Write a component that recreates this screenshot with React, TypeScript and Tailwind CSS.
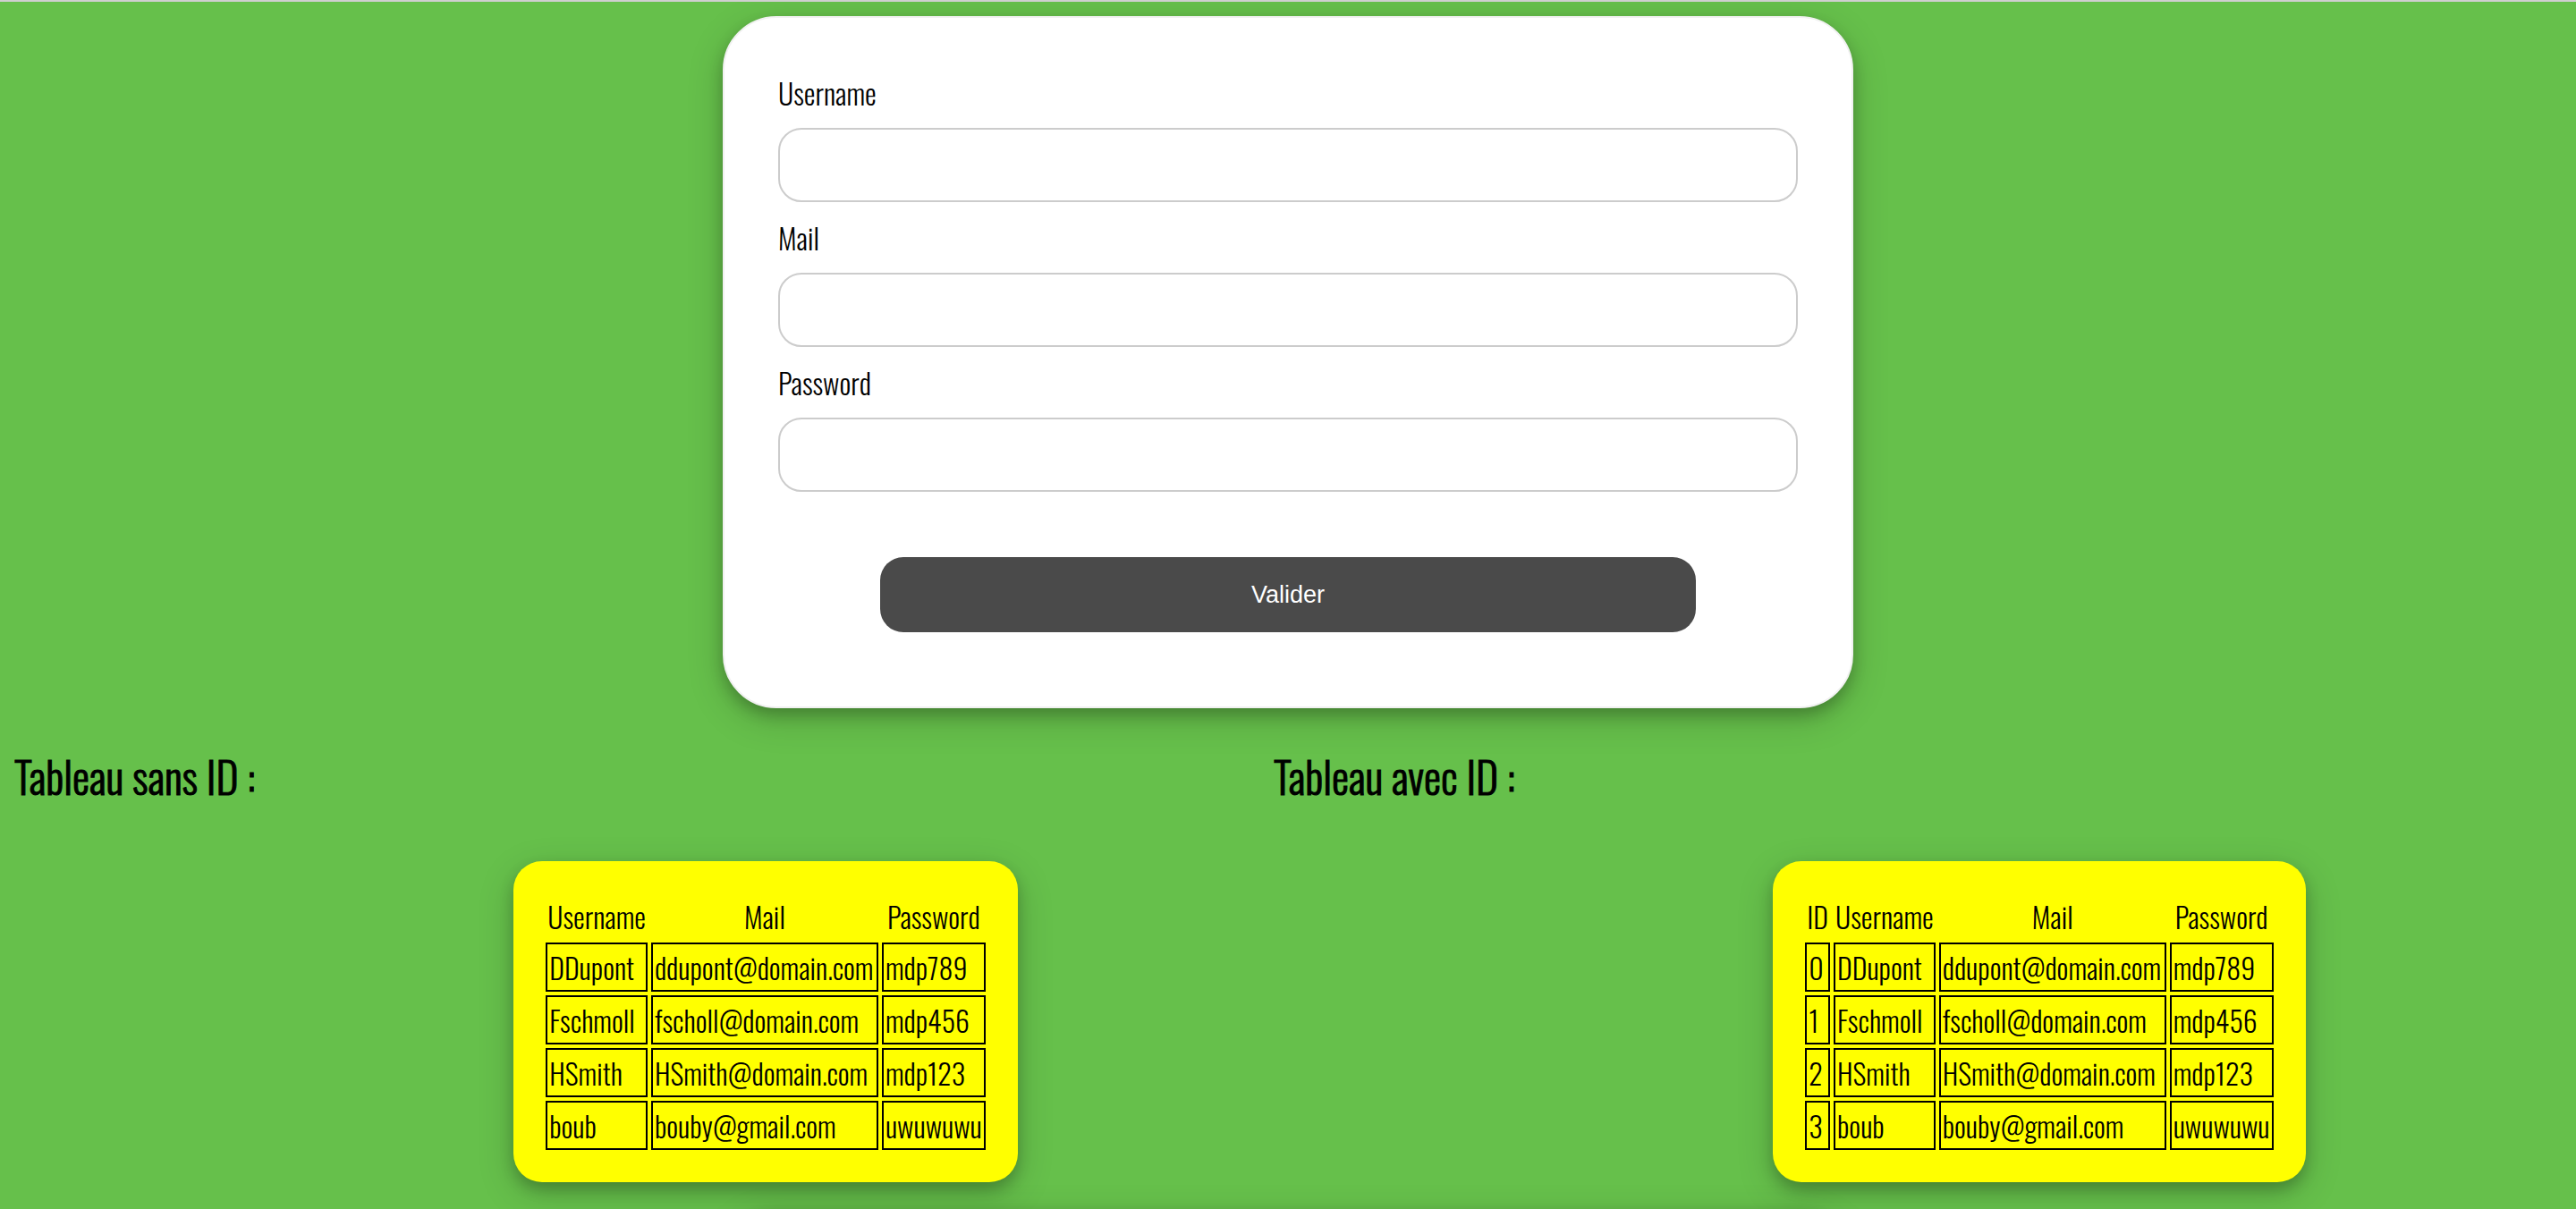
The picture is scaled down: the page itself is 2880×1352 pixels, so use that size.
type User = { id: number; username: string; mail: string; password: string };

const users: User[] = [
  { id: 0, username: "DDupont", mail: "ddupont@domain.com", password: "mdp789" },
  { id: 1, username: "Fschmoll", mail: "fscholl@domain.com", password: "mdp456" },
  { id: 2, username: "HSmith", mail: "HSmith@domain.com", password: "mdp123" },
  { id: 3, username: "boub", mail: "bouby@gmail.com", password: "uwuwuwu" },
];

const shadow = "shadow-[0_8px_16px_rgba(0,0,0,0.2),0_12px_40px_rgba(0,0,0,0.19)]";

function Field({ id, label, type }: { id: string; label: string; type: string }) {
  return (
    <div className="mb-4">
      <label htmlFor={id} className="mb-4 block">
        {label}
      </label>
      <input
        id={id}
        type={type}
        className="block h-[83px] w-full rounded-[26px] border-2 border-[#cccccc] bg-white px-6 outline-none"
      />
    </div>
  );
}

function UserTable({ title, withId = false }: { title: string; withId?: boolean }) {
  const cell = "border-2 border-black p-0.5 text-left whitespace-nowrap";
  const head = "p-0.5 text-center font-light whitespace-nowrap";
  return (
    <section>
      <h2 className="text-[48px] leading-[71px] [-webkit-text-stroke:1px_black]">{title}</h2>
      <div className={`mt-[60px] ml-[39.65%] w-fit rounded-[32px] bg-[#ffff00] p-8 ${shadow}`}>
        <table className="border-separate border-spacing-1">
          <thead>
            <tr>
              {withId && <th className={head}>ID</th>}
              <th className={head}>Username</th>
              <th className={`${head} min-w-[254px]`}>Mail</th>
              <th className={`${head} min-w-[115px]`}>Password</th>
            </tr>
          </thead>
          <tbody>
            {users.map((u) => (
              <tr key={u.id}>
                {withId && <td className={cell}>{u.id}</td>}
                <td className={cell}>{u.username}</td>
                <td className={cell}>{u.mail}</td>
                <td className={cell}>{u.password}</td>
              </tr>
            ))}
          </tbody>
        </table>
      </div>
    </section>
  );
}

export default function App() {
  return (
    <main className="relative min-h-screen overflow-hidden border-t-2 border-[#cfcfcf] bg-[#66c04b] pt-4 pb-[30px] font-['Oswald','Liberation_Sans_Narrow','Liberation_Sans',sans-serif] text-[32px] leading-[47px] font-light text-black">
      <form
        className={`mx-auto w-full max-w-[1264px] rounded-[60px] border-2 border-[#f1f1f1] bg-white p-[60px] ${shadow}`}
        onSubmit={(e) => e.preventDefault()}
      >
        <Field id="username" label="Username" type="text" />
        <Field id="mail" label="Mail" type="email" />
        <Field id="password" label="Password" type="password" />
        <button
          type="submit"
          className="mx-auto mt-[73px] mb-[23px] block h-[84px] w-4/5 rounded-[26px] bg-[#4a4a4a] font-['Liberation_Sans',sans-serif] text-[27px] font-normal text-white"
        >
          Valider
        </button>
      </form>
      <div className="mt-10 grid grid-cols-2 pr-12 pl-4">
        <UserTable title="Tableau sans ID :" />
        <UserTable title="Tableau avec ID :" withId />
      </div>
      {/* Soft shade along the lower edge of the page */}
      <div
        aria-hidden="true"
        className={`absolute inset-x-0 top-full mx-auto h-40 max-w-[1264px] rounded-[60px] ${shadow}`}
      />
    </main>
  );
}
